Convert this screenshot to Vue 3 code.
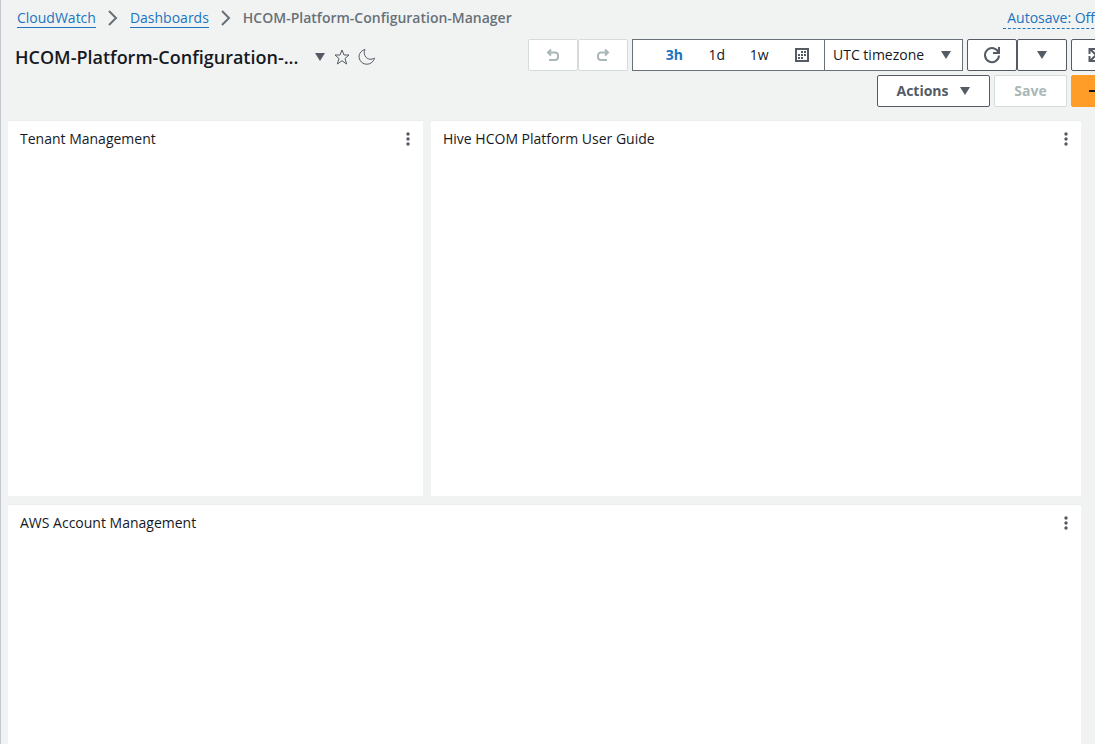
<script setup>
const ranges = ['3h', '1d', '1w']
const active = '3h'
const widgets = [
  { title: 'Tenant Management', wide: false },
  { title: 'Hive HCOM Platform User Guide', wide: false },
  { title: 'AWS Account Management', wide: true },
]
const cells = [[6, 3], [9, 3], [3, 6], [6, 6], [9, 6], [3, 9], [6, 9]]
</script>

<template>
  <div class="page">
    <header class="top">
      <nav class="crumbs" aria-label="Breadcrumbs">
        <a href="#">CloudWatch</a>
        <svg class="chev" width="10" height="16" viewBox="0 0 10 16"><path d="M1 1l7 7-7 7" /></svg>
        <a href="#">Dashboards</a>
        <svg class="chev" width="10" height="16" viewBox="0 0 10 16"><path d="M1 1l7 7-7 7" /></svg>
        <span class="current">HCOM-Platform-Configuration-Manager</span>
      </nav>
      <a class="autosave" href="#">Autosave: Off</a>
    </header>

    <div class="bar">
      <div class="heading">
        <h1>HCOM-Platform-Configuration-...</h1>
        <button class="plain" aria-label="Switch dashboard">
          <svg width="12" height="10" viewBox="0 0 12 10"><path class="fill" d="M1 1h10L6 9z" /></svg>
        </button>
        <button class="plain" aria-label="Favorite">
          <svg width="16" height="16" viewBox="0 0 16 16"><path class="thin" d="M8 1l2 5h5l-4 3.500 1.600 5.500L8 11.700 3.400 15 5 9.500 1 6h5z" /></svg>
        </button>
        <button class="plain" aria-label="Dark mode">
          <svg width="18" height="18" viewBox="0 0 18 18"><path class="thin" d="M7 1.500C2.500 2.500 0 7 1.500 11c1.700 5 7.500 6.500 11.500 4 1.900-1.200 3-3 3.500-5-3 2-6.500 1.500-8.500-.8C6 7 5.700 4 7 1.500z" /></svg>
        </button>
      </div>

      <div class="tools">
        <div class="row">
          <div class="pair">
            <button class="btn icon off" disabled aria-label="Undo">
              <svg width="14" height="14" viewBox="0 0 14 14"><path class="bold" d="M2 4.500h7a3 3 0 0 1 3 3V9a3 3 0 0 1-3 3H3M5 1.500l-3 3 3 3" /></svg>
            </button>
            <button class="btn icon off" disabled aria-label="Redo">
              <svg width="14" height="14" viewBox="0 0 14 14"><path class="bold" d="M12 4.500H5a3 3 0 0 0-3 3V9a3 3 0 0 0 3 3h6M9 1.500l3 3-3 3" /></svg>
            </button>
          </div>
          <div class="time">
            <div class="ranges">
              <button v-for="r in ranges" :key="r" class="range" :class="{ active: r === active }">{{ r }}</button>
              <button class="range cal" aria-label="Custom range">
                <svg width="14" height="14" viewBox="0 0 14 14">
                  <rect x="1" y="1" width="12" height="12" class="frame" />
                  <rect v-for="([x, y], i) in cells" :key="i" :x="x" :y="y" width="2" height="2" class="fill" />
                </svg>
              </button>
            </div>
            <button class="zone">
              UTC timezone
              <svg width="12" height="10" viewBox="0 0 12 10"><path class="fill" d="M1 1h10L6 9z" /></svg>
            </button>
          </div>
          <div class="pair">
            <button class="btn icon" aria-label="Refresh">
              <svg width="18" height="18" viewBox="0 0 18 18"><path class="bold" d="M15.500 6.500A7 7 0 1 0 16 9.500M16 1v6h-6" /></svg>
            </button>
            <button class="btn icon" aria-label="Refresh options">
              <svg width="12" height="10" viewBox="0 0 12 10"><path class="fill" d="M1 1h10L6 9z" /></svg>
            </button>
          </div>
          <button class="btn icon" aria-label="Full screen">
            <svg width="16" height="16" viewBox="0 0 16 16"><path class="bold" d="M1.500 7V2H7M9 2h5.500v5M14.500 9v5H9M7 14H1.500V9M2 2l12 12M14 2L2 14" /></svg>
          </button>
        </div>
        <div class="row">
          <button class="btn actions">
            Actions
            <svg width="12" height="10" viewBox="0 0 12 10"><path class="fill" d="M1 1h10L6 9z" /></svg>
          </button>
          <button class="btn save off" disabled>Save</button>
          <button class="btn add" aria-label="Add widget">
            <svg width="14" height="14" viewBox="0 0 14 14"><path class="bold" d="M0 7h14M7 0v14" /></svg>
          </button>
        </div>
      </div>
    </div>

    <main class="grid">
      <section v-for="w in widgets" :key="w.title" class="widget" :class="{ wide: w.wide }">
        <h2>{{ w.title }}</h2>
        <button class="plain" aria-label="Widget actions">
          <svg width="4" height="16" viewBox="0 0 4 16">
            <circle v-for="y in [3, 8, 13]" :key="y" class="fill" cx="2" :cy="y" r="1.700" />
          </svg>
        </button>
      </section>
    </main>
  </div>
</template>

<style>
body {
  background: #f1f3f3;
}
</style>

<style scoped>
.page {
  box-sizing: border-box;
  min-height: 100vh;
  display: flex;
  flex-direction: column;
  overflow: hidden;
  border-left: 1px solid #c3c8ce;
  background: #f1f3f3;
  color: #16191f;
  font: 14px/20px "Open Sans", "Noto Sans", sans-serif;
}
svg {
  display: block;
  flex: none;
  fill: none;
  stroke: none;
  color: #545b64;
}
.fill {
  fill: currentColor;
}
.thin {
  stroke: currentColor;
  stroke-width: 1;
}
.bold,
.frame {
  stroke: currentColor;
  stroke-width: 2;
}
button {
  font: inherit;
  color: inherit;
  margin: 0;
  cursor: pointer;
}
a {
  color: #2074bf;
  text-decoration: none;
}
.top {
  display: flex;
  justify-content: space-between;
  margin-right: -4px;
  padding: 8px 0 0 16px;
}
.crumbs {
  display: flex;
  align-items: center;
  gap: 12px;
  height: 20px;
}
.crumbs a {
  line-height: 18px;
  border-bottom: 1px solid;
}
.chev path {
  stroke: #687078;
  stroke-width: 2;
}
.current {
  font-weight: 600;
  color: #687078;
}
.autosave {
  padding: 0 4px;
  border-bottom: 1px dashed;
  white-space: nowrap;
}
.bar {
  display: flex;
  justify-content: space-between;
  margin-right: -26px;
  padding: 10px 0 13px 14px;
}
.heading {
  display: flex;
  align-items: center;
  gap: 8px;
  height: 36px;
}
h1 {
  margin: 0 8px 0 0;
  font-size: 18px;
  line-height: 24px;
  font-weight: 600;
  white-space: nowrap;
}
.plain {
  padding: 0;
  border: 0;
  background: none;
}
.tools {
  display: flex;
  flex-direction: column;
  gap: 4px;
}
.row {
  display: flex;
  gap: 4px;
}
.row:last-child {
  justify-content: flex-end;
}
.pair {
  display: flex;
}
.btn {
  box-sizing: border-box;
  display: flex;
  align-items: center;
  justify-content: center;
  height: 32px;
  padding: 0 19px;
  border: 1px solid #545b64;
  border-radius: 2px;
  background: #fff;
  color: #545b64;
  font-weight: 700;
}
.icon {
  width: 50px;
  padding: 0;
}
.off,
.off svg {
  border-color: #d5dbdb;
  color: #aab7b8;
}
.time {
  box-sizing: border-box;
  display: flex;
  height: 32px;
  border: 1px solid #687078;
  background: #fff;
}
.ranges {
  display: flex;
  box-sizing: border-box;
  width: 192px;
  padding: 0 1px 0 20px;
  border-right: 1px solid #687078;
}
.range {
  flex: 1;
  display: flex;
  align-items: center;
  justify-content: center;
  padding: 0;
  border: 0;
  background: none;
}
.active {
  color: #2074bf;
  font-weight: 700;
}
.zone {
  display: flex;
  align-items: center;
  justify-content: space-between;
  width: 137px;
  padding: 0 10px 0 8px;
  border: 0;
  background: none;
}
.actions {
  width: 113px;
  gap: 10px;
  padding: 0;
}
.save {
  width: 73px;
  padding: 0;
}
.add {
  width: 50px;
  border-color: #ff9d28;
  background: #ff9d28;
}
.add svg {
  color: #16191f;
}
.grid {
  flex: 1;
  display: grid;
  grid-template-columns: 415fr 650fr;
  grid-template-rows: 376px 1fr;
  gap: 8px;
  padding: 0 14px 0 7px;
}
.widget {
  display: flex;
  justify-content: space-between;
  align-items: flex-start;
  padding: 8px 13px 0 12px;
  border-top: 1px solid #eaeded;
  box-sizing: border-box;
  background: #fff;
}
.wide {
  grid-column: 1 / -1;
}
h2 {
  margin: 0;
  font-size: 14px;
  line-height: 20px;
  font-weight: 400;
}
.widget .plain {
  padding-top: 2px;
}
</style>
